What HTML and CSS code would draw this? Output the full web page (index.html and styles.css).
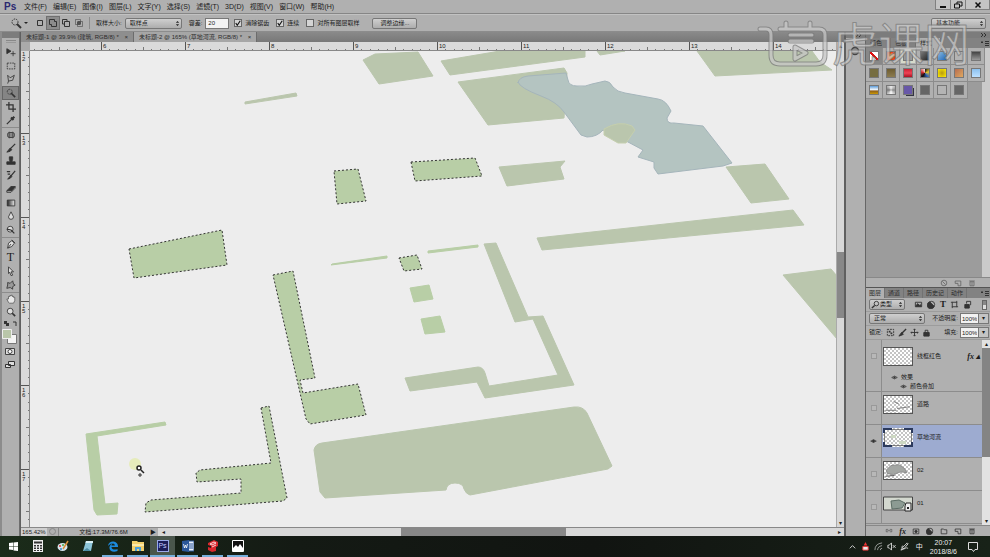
FILE: index.html
```html
<!DOCTYPE html>
<html lang="zh-CN">
<head>
    <meta charset="UTF-8">
    <meta name="viewport" content="width=device-width, initial-scale=1.0">
    <title>未标题-2 @ 165%</title>
    <link rel="stylesheet" href="styles.css">
</head>
<body>
    <header class="menubar">
        <span class="logo">Ps</span>
        <nav class="menus">
            <a href="#">文件(F)</a>
            <a href="#">编辑(E)</a>
            <a href="#">图像(I)</a>
            <a href="#">图层(L)</a>
            <a href="#">文字(Y)</a>
            <a href="#">选择(S)</a>
            <a href="#">滤镜(T)</a>
            <a href="#">3D(D)</a>
            <a href="#">视图(V)</a>
            <a href="#">窗口(W)</a>
            <a href="#">帮助(H)</a>
        </nav>
        <div class="window-buttons">
            <button aria-label="最小化"><svg viewBox="0 0 12 8"><path d="M3 6h6" stroke-width="2"/></svg></button>
            <button aria-label="还原"><svg viewBox="0 0 12 8"><path d="M5 3V1h5v4H8M2.500 3h5v4h-5z"/></svg></button>
            <button class="close" aria-label="关闭"><svg viewBox="0 0 12 8"><path d="M3.500 1.500l5 5M8.500 1.500l-5 5" stroke-width="1.500"/></svg></button>
        </div>
    </header>

    <section class="options">
        <svg class="wand" viewBox="0 0 18 12"><circle cx="5" cy="5" r="3" stroke-dasharray="1.500 1"/><path d="M7 7l4 4" stroke-width="2"/><path d="M14 5h4l-2 2z" fill="#222" stroke="none"/></svg>
        <div class="modes">
            <button aria-label="新选区"><svg viewBox="0 0 10 10"><path d="M2.500 2.500h5v5h-5z"/></svg></button>
            <button class="on" aria-label="添加到选区"><svg viewBox="0 0 10 10"><path d="M1.500 1.500h5v2h2v5h-5v-2h-2z"/></svg></button>
            <button aria-label="从选区减去"><svg viewBox="0 0 10 10"><path d="M6 3.500V1.500H1.500V6h2M3.500 3.500h5v5h-5z"/></svg></button>
            <button aria-label="与选区交叉"><svg viewBox="0 0 10 10"><path d="M1.500 1.500h5v5h-5zM3.500 3.500h5v5h-5z" opacity=".5"/><path d="M4 4h2v2H4z"/></svg></button>
        </div>
        <label class="sized">取样大小: <select><option>取样点</option></select></label>
        <label class="tolerance">容差: <input type="text" value="20"></label>
        <label class="check"><input type="checkbox" checked>消除锯齿</label>
        <label class="check"><input type="checkbox" checked>连续</label>
        <label class="check"><input type="checkbox">对所有图层取样</label>
        <button class="refine">调整边缘...</button>
        <select class="space" aria-label="工作区"><option>基本功能</option></select>
    </section>

    <main class="workspace">
        <aside class="tools">
            <div class="dock-head"></div>
            <div class="grip"></div>
            <div class="tool-list">
                <button aria-label="移动"><svg viewBox="0 0 12 12"><path class="f" d="M1 2l5 3-5 3z"/><path d="M8.500 5v6M5.500 8h6"/></svg></button>
                <button aria-label="矩形选框"><svg viewBox="0 0 12 12"><path d="M1.500 2.500h9v7h-9z" stroke-dasharray="2 1"/></svg></button>
                <button aria-label="套索"><svg viewBox="0 0 12 12"><path d="M2 1.500l3 3 5-3-2 6-5 1zM3 8.500l-1 3"/></svg></button>
                <button class="on" aria-label="魔棒"><svg viewBox="0 0 12 12"><circle cx="4.500" cy="4.500" r="3" stroke-dasharray="2 1"/><path d="M6 6l5 5" stroke-width="2"/></svg></button>
                <button aria-label="裁剪"><svg viewBox="0 0 12 12"><path d="M3.500 0v8.500H12M0 3.500h8.500V12" stroke-width="1.500"/></svg></button>
                <button aria-label="吸管"><svg viewBox="0 0 12 12"><path d="M1 11l6-6" stroke-width="1.500"/><path d="M6 3l3 3M7 5l3-3" stroke-width="2.500"/></svg></button>
                <button class="first" aria-label="修补"><svg viewBox="0 0 12 12"><rect x="2" y="3" width="8" height="6" rx="2" fill="#888"/><path d="M4 2v8M8 2v8" stroke-width=".7"/></svg></button>
                <button aria-label="画笔"><svg viewBox="0 0 12 12"><path d="M11 1L5 7" stroke-width="1.500"/><path class="f" d="M5 6l2 2-2 2-4 1z"/></svg></button>
                <button aria-label="图章"><svg viewBox="0 0 12 12"><path class="f" d="M4 1h4v3l-1 3h4v3H1V7h4L4 4z"/></svg></button>
                <button aria-label="历史画笔"><svg viewBox="0 0 12 12"><path d="M11 1L6 7M1 2h4M2 5h3" stroke-width="1.500"/><path class="f" d="M6 6l1 2-2 2-3 1z"/></svg></button>
                <button aria-label="橡皮擦"><svg viewBox="0 0 12 12"><path class="f" d="M1 8l5-5h5L7 8z"/><path d="M1 8v2h5l5-5V3"/></svg></button>
                <button aria-label="渐变"><svg viewBox="0 0 12 12"><defs><linearGradient id="grad"><stop stop-color="#222"/><stop offset="1" stop-color="#eee"/></linearGradient></defs><path d="M1.500 2.500h9v7h-9z" fill="url(#grad)"/></svg></button>
                <button aria-label="模糊"><svg viewBox="0 0 12 12"><path d="M6 1l3 6a3 3 0 1 1-6 0z" fill="#ddd"/></svg></button>
                <button aria-label="减淡"><svg viewBox="0 0 12 12"><circle cx="5" cy="5" r="3.500" fill="#ddd"/><path d="M1 5l5 1 4 4" stroke-width="1.500"/></svg></button>
                <button class="first" aria-label="钢笔"><svg viewBox="0 0 12 12"><path d="M2 11l1-6 4-3 3 3-3 4zM2 11l4-5M7 1l4 4" fill="#ddd"/></svg></button>
                <button class="letter" aria-label="文字">T</button>
                <button aria-label="路径选择"><svg viewBox="0 0 12 12"><path d="M3 1l6 6H6l2 4-2 .500-1.500-4L3 9z" fill="#ddd"/></svg></button>
                <button aria-label="形状"><svg viewBox="0 0 12 12"><path d="M2 3l3 1 3-3 1 4 2 1-3 2v3L5 9l-4 1 1-4z" fill="#999"/></svg></button>
                <button class="first" aria-label="抓手"><svg viewBox="0 0 12 12"><path d="M3 10L1 6l2 0V3h1.500V2H6V1.500h1.500V3H9v1h1.500v4L9 11H4z" fill="#e8e8e8" stroke-width=".7"/></svg></button>
                <button aria-label="缩放"><svg viewBox="0 0 12 12"><circle cx="5" cy="5" r="3.500" fill="#ddd"/><path d="M7.500 7.500L11 11" stroke-width="2"/></svg></button>
            </div>
            <svg class="swatches" viewBox="0 0 17 54">
                <path d="M2 2h3v3H2zM4 4h3v3H4z" fill="#333"/>
                <path d="M11 3h3v4" stroke="#333"/>
                <path d="M5.500 15.500h9v9h-9z" fill="#f4f4f4" stroke="#777"/>
                <path d="M.500 10.500h9v9h-9z" fill="#b9c6a9" stroke="#eee"/>
                <path d="M3.500 29.500h9v6h-9z" fill="#ddd" stroke="#444"/>
                <circle cx="8" cy="32.500" r="2" fill="#fff" stroke="#444"/>
                <path d="M6.500 42.500h6v4h-6zM3.500 45.500h5v3h-5z" fill="#ddd" stroke="#333"/>
            </svg>
        </aside>

        <section class="document">
            <div class="tabs">
                <button class="tab">未标题-1 @ 39.9% (建筑, RGB/8) * <i>×</i></button>
                <button class="tab on">未标题-2 @ 165% (草地河流, RGB/8) * <i>×</i></button>
            </div>
            <div class="view">
                <div class="corner"></div>
                <svg class="ruler-x">
                    <defs>
                        <pattern id="ticks-x" x="71" width="84" height="9" patternUnits="userSpaceOnUse">
                            <path d="M.500 0v9" stroke="#555"/>
                            <path d="M8.500 7v2M17.500 7v2M25.500 7v2M34.500 7v2M42.500 5v4M50.500 7v2M59.500 7v2M67.500 7v2M76.500 7v2" stroke="#777"/>
                        </pattern>
                    </defs>
                    <rect width="100%" height="9" fill="url(#ticks-x)" stroke="none"/>
                    <g>
                        <text x="73" y="6">6</text>
                        <text x="157" y="6">7</text>
                        <text x="241" y="6">8</text>
                        <text x="325" y="6">9</text>
                        <text x="409" y="6">10</text>
                        <text x="493" y="6">11</text>
                        <text x="577" y="6">12</text>
                        <text x="661" y="6">13</text>
                        <text x="745" y="6">14</text>
                    </g>
                </svg>
                <div class="scroll-y"><button aria-label="向上滚动">▴</button><span class="thumb"></span><button aria-label="向下滚动">▾</button></div>
                <svg class="ruler-y">
                    <defs>
                        <pattern id="ticks-y" y="82" width="9" height="84" patternUnits="userSpaceOnUse">
                            <path d="M0 .500h9" stroke="#555"/>
                            <path d="M7 8.500h2M7 17.500h2M7 25.500h2M7 34.500h2M5 42.500h4M7 50.500h2M7 59.500h2M7 67.500h2M7 76.500h2" stroke="#777"/>
                        </pattern>
                    </defs>
                    <rect width="9" height="100%" fill="url(#ticks-y)" stroke="none"/>
                    <g>
                        <text x="1" y="5">1<tspan x="1" dy="5">2</tspan></text>
                        <text x="1" y="89">1<tspan x="1" dy="5">3</tspan></text>
                        <text x="1" y="173">1<tspan x="1" dy="5">4</tspan></text>
                        <text x="1" y="257">1<tspan x="1" dy="5">5</tspan></text>
                        <text x="1" y="341">1<tspan x="1" dy="5">6</tspan></text>
                        <text x="1" y="425">1<tspan x="1" dy="5">7</tspan></text>
                    </g>
                </svg>
                <svg class="canvas" viewBox="30 51 806 476" preserveAspectRatio="xMinYMin slice">
                    <g class="muted">
                        <path d="M363 60l12-6 43-2 15 24-54 8z"/>
                        <path d="M441 61l59-10h85v6L450 75z"/>
                        <path d="M597 51h28l-25 4z"/>
                        <path d="M458 82l106-14 3 5-3 45-76 7z"/>
                        <path d="M697 51h115l8 11 12 8-117 6z"/>
                        <path d="M499 167l66-6-5 6 4 12-57 7z"/>
                        <path d="M726 167l39-3 24 35-38 4z"/>
                        <path d="M537 238l256-28 11 15-262 25z"/>
                        <path d="M783 275l48-6 6 7v63z"/>
                        <path d="M484 244l12-1 32 74 15-1 31 69-89 13-8-16-67 9-5-13 73-11q5 0 7 6l4 13 69-11-25-56-18 3z"/>
                        <path d="M314 450q1-6 8-7l252-36q9-1 13 6l25 53-4 3-138 26q-4-1-6-6-1-6-9-6t-9 7l-121 8-5-6z"/>
                        <path d="M245 102l51-9 1 3-52 8z"/>
                    </g>
                    <path class="river" d="M518 83q1-6 10-7l38-3 2 7q1 6 9 6 9 1 15-2l13-3q5 0 8 6 4 5 12 6l33 6q8 1 13 12l-4 7q0 6 7 5l29 3 29 37-9 3-65 8-4-6v-6l-16-5 5-7-15-8-25-12q-6 7-16 7l-6-2-17-23q-7-10-23-16-21-8-23-14z"/>
                    <path class="island" d="M604 129q15-9 28-3l3 4-9 13h-8l-14-8z"/>
                    <g class="green">
                        <path d="M86 434l79-12 1 3-69 11 8 68 13-1-1 11-20 1-3-5z"/>
                        <path d="M332 264l55-8v2l-56 7zM428 251l50-6v2l-50 6z"/>
                        <path d="M410 288l19-3 4 14-19 3zM421 319l19-3 5 16-20 2z"/>
                    </g>
                    <g class="selected">
                        <path d="M129 249l93-19 5 35-93 13z"/>
                        <path d="M334 171l24-2 8 32-29 3z"/>
                        <path d="M411 162l64-4 7 18-67 5z"/>
                        <path d="M399 258l18-3 5 14-18 2z"/>
                        <path d="M273 275l20-4 22 107-15 2 3 13 55-9 8 31-56 9-4-5z"/>
                        <path d="M261 408l8-2 18 92-4 3-138 11 1-9 5-3 90-7v-14l-44 3-1-9 4-3 71-7z"/>
                    </g>
                    <circle cx="135" cy="464" r="6" fill="#e6ecbb" stroke="none"/>
                    <path d="M141 470l3 3" stroke="#222" stroke-width="1.500"/>
                    <circle cx="139" cy="468" r="2" fill="#fff" stroke="#222" stroke-width="1.500"/>
                    <path d="M138 475h4M140 473v4" stroke="#333"/>
                </svg>
                <div class="status">
                    <span class="zoom">165.42%</span>
                    <span class="clock"></span>
                    <span class="size">文档:17.3M/76.6M</span>
                    <button aria-label="状态菜单">▶</button>
                    <div class="scroll-x"><button aria-label="向左滚动">◂</button><span class="thumb"></span><button aria-label="向右滚动">▸</button></div>
                </div>
            </div>
        </section>

        <aside class="strip">
            <div class="dock-head"><svg viewBox="0 0 8 6"><path d="M1 1l2 2-2 2M4 1l2 2-2 2"/></svg></div>
            <svg class="history" viewBox="0 0 18 14"><circle cx="9" cy="7" r="3.500" fill="#999" stroke="#444" stroke-width="1.500"/></svg>
        </aside>

        <aside class="panels">
            <div class="dock-head"><svg viewBox="0 0 8 6"><path d="M1 1l2 2-2 2M4 1l2 2-2 2"/></svg></div>
            <section class="styles">
                <div class="panel-tabs"><button>颜色</button><button>色板</button><button class="on">样式</button><svg viewBox="0 0 10 8"><path class="f" d="M1 3h2L2 4z"/><path d="M5 2.500h4M5 4.500h4M5 6.500h4"/></svg></div>
                <div class="styles-body">
                    <div class="style-grid">
                        <i class="none"></i><i class="fire"></i><i class="grey"></i><i class="shade"></i><i class="blue"></i><i class="clear"></i><i class="half"></i>
                        <i class="olive"></i><i class="brown"></i><i class="red"></i><i class="camo"></i><i class="yellow"></i><i class="tan"></i><i class="sky"></i>
                        <i class="sunset"></i><i class="noise"></i><i class="purple"></i><i class="dark"></i><i class="clear"></i><i class="dark"></i>
                    </div>
                </div>
                <div class="panel-foot styles-foot">
                    <svg viewBox="0 0 10 10"><circle cx="5" cy="5" r="3.500"/><path d="M3 3l4 4"/></svg>
                    <svg viewBox="0 0 10 10"><path d="M1.500 2.500h7v6H5v-3H1.500z"/></svg>
                    <svg viewBox="0 0 10 10"><path d="M2.500 3.500h5v5h-5zM1.500 2.500h7M5 4v4"/></svg>
                </div>
            </section>
            <section class="layers">
                <div class="panel-tabs"><button class="on">图层</button><button>通道</button><button>路径</button><button>历史记</button><button>动作</button><svg viewBox="0 0 10 8"><path class="f" d="M1 3h2L2 4z"/><path d="M5 2.500h4M5 4.500h4M5 6.500h4"/></svg></div>
                <div class="row filter">
                    <span class="kind"><svg viewBox="0 0 10 10"><circle cx="6" cy="4" r="2.500"/><path d="M4 6L1 9" stroke-width="1.500"/></svg><select aria-label="图层过滤"><option>类型</option></select></span>
                    <svg viewBox="0 0 10 10"><path d="M1.500 2.500h7v5h-7z"/><path class="f" d="M2 7l2-3 2 2 1-1 1 2z"/></svg>
                    <svg viewBox="0 0 10 10"><circle cx="5" cy="5" r="3.500"/><path class="f" d="M3 2l5 5a4 4 0 1 1-5-5z"/></svg>
                    <b>T</b>
                    <svg viewBox="0 0 10 10"><path d="M2.500 2.500h5v5h-5zM1 2.500h2M7 7.500h2M2.500 7v2M7.500 1v2"/></svg>
                    <svg viewBox="0 0 10 10"><path class="f" d="M2 5h5v4H2z"/><path d="M4 4V1.500h4.500v4H8"/></svg>
                    <span class="switch"></span>
                </div>
                <div class="row">
                    <select class="blend" aria-label="混合模式"><option>正常</option></select>
                    <label>不透明度: <input type="text" value="100%"></label><button class="drop" aria-label="不透明度">▾</button>
                </div>
                <div class="row lock">
                    <span>锁定:</span>
                    <svg viewBox="0 0 10 10"><path d="M1.500 1.500h7v7h-7z" stroke-dasharray="2 1"/><path class="f" d="M3 3h2v2H3zM5 5h2v2H5z" stroke="none"/></svg>
                    <svg viewBox="0 0 10 10"><path d="M9 1L4 6" stroke-width="1.500"/><path class="f" d="M4 5l2 2-2 1-3 1z"/></svg>
                    <svg viewBox="0 0 10 10"><path d="M5 1v8M1 5h8M4 2l1-1 1 1M4 8l1 1 1-1M2 4L1 5l1 1M8 4l1 1-1 1"/></svg>
                    <svg viewBox="0 0 10 10"><path class="f" d="M2 5h6v4H2z"/><path d="M3.500 5V2.500h3V5"/></svg>
                    <label>填充: <input type="text" value="100%"></label><button class="drop" aria-label="填充">▾</button>
                </div>
                <div class="layer-area">
                    <ul class="layer-list">
                        <li class="layer tall">
                            <span class="eye"><i></i></span>
                            <div class="layer-main"><span class="pic checker"></span><span class="name">线框红色</span><em>fx ▴</em></div>
                            <div class="effects">
                                <p><svg viewBox="0 0 10 6"><path d="M1 3q4-4 8 0-4 4-8 0z"/><circle class="f" cx="5" cy="3" r="1"/></svg>效果</p>
                                <p class="deep"><svg viewBox="0 0 10 6"><path d="M1 3q4-4 8 0-4 4-8 0z"/><circle class="f" cx="5" cy="3" r="1"/></svg>颜色叠加</p>
                            </div>
                        </li>
                        <li class="layer">
                            <span class="eye"><i></i></span>
                            <div class="layer-main"><svg class="pic checker" viewBox="0 0 30 19"><path d="M1 16h12M14 14l14-2M10 6l6 3" stroke="#777"/></svg><span class="name">道路</span></div>
                        </li>
                        <li class="layer on">
                            <span class="eye"><svg viewBox="0 0 10 6"><path d="M1 3q4-4 8 0-4 4-8 0z"/><circle class="f" cx="5" cy="3" r="1.500"/></svg></span>
                            <div class="layer-main"><svg class="pic checker" viewBox="0 0 30 19"><path d="M8 7h5v3H8zM16 13h7v3h-7z" fill="#cdd8c2" stroke="none"/><path d="M1.500 1.500h27v16h-27z" stroke="#555" stroke-width=".7"/><path d="M1 5V1h8M21 1h8v4M1 14v4h8M21 18h8v-4" stroke="#2c3a5c" stroke-width="2"/></svg><span class="name">草地河流</span></div>
                        </li>
                        <li class="layer">
                            <span class="eye"><i></i></span>
                            <div class="layer-main"><svg class="pic checker" viewBox="0 0 30 19"><path d="M2 9l5-5 9-1 6 4 3 5-7-1-8 3-7-1z" fill="#a3a6a3" stroke="#888"/><path d="M1 16l10-1" stroke="#555"/></svg><span class="name">02</span></div>
                        </li>
                        <li class="layer">
                            <span class="eye"><i></i></span>
                            <div class="layer-main"><svg class="pic" viewBox="0 0 30 19"><path d="M.500 3h29v13H.500z" fill="#d3d8cf" stroke="#444"/><path d="M8 7l8-1 6 3-3 5-10 1z" fill="#8c9b93" stroke="#5c6c65"/><path d="M23 9h5v8h-6v-5z" fill="#eee" stroke="#222"/><path d="M24 13h2v2h-2z" fill="#222" stroke="none"/></svg><span class="name">01</span></div>
                        </li>
                        <li class="layer rest"></li>
                    </ul>
                    <div class="layer-scroll"><button aria-label="向上滚动">▴</button><span class="thumb"></span><button aria-label="向下滚动">▾</button></div>
                </div>
                <div class="panel-foot">
                    <svg viewBox="0 0 10 10"><path d="M4 3H1.500v3H4M6 3h2.500v3H6M3 4.500h4" opacity=".6"/></svg>
                    <em>fx</em>
                    <svg viewBox="0 0 10 10"><path d="M1.500 2.500h7v6h-7z"/><circle class="f" cx="5" cy="5.500" r="1.500"/></svg>
                    <svg viewBox="0 0 10 10"><circle cx="5" cy="5" r="3.500"/><path class="f" d="M3 2l5 5a4 4 0 1 1-5-5z"/></svg>
                    <svg viewBox="0 0 10 10"><path d="M1.500 8.500v-6h3l1 1h3v5z"/></svg>
                    <svg viewBox="0 0 10 10"><path d="M1.500 2.500h7v6H5v-3H1.500z"/></svg>
                    <svg viewBox="0 0 10 10"><path d="M2.500 3.500h5v5h-5zM1.500 2.500h7M5 4v4"/></svg>
                </div>
            </section>
        </aside>
    </main>

    <footer class="taskbar">
        <div class="apps">
            <button aria-label="开始"><svg viewBox="0 0 12 12"><path d="M2 3l4-.500V6H2zM6.500 2.500L11 2v4H6.500zM2 6.500h4V10l-4-.500zM6.500 6.500H11v4.500l-4.500-.500z" fill="#fff"/></svg></button>
            <button aria-label="计算器"><svg viewBox="0 0 12 12"><path d="M1 0h10v12H1z" fill="#eee"/><path d="M2 1.500h8v2H2zM2 5h2v1.500H2zM5 5h2v1.500H5zM8 5h2v1.500H8zM2 7.500h2V9H2zM5 7.500h2V9H5zM8 7.500h2V9H8zM2 10h2v1H2zM5 10h2v1H5zM8 10h2v1H8z" fill="#333"/></svg></button>
            <button aria-label="画图"><svg viewBox="0 0 12 12"><ellipse cx="5.500" cy="7" rx="5" ry="4" fill="#d6e6ef"/><circle cx="3" cy="6" r="1" fill="#d33"/><circle cx="4" cy="9" r="1" fill="#38c"/><circle cx="6" cy="5" r="1" fill="#4a4"/><path d="M6 9l5-8" stroke="#d9903c" stroke-width="1.500"/></svg></button>
            <button aria-label="记事本"><svg viewBox="0 0 12 12"><path d="M4 1h7l-2 10H1z" fill="#8cc4d8"/><path d="M4 1h7v2H3.500z" fill="#d8eef4"/><path d="M1 11l4-3 4 3z" fill="#4d8ca5"/></svg></button>
            <button class="open" aria-label="Edge"><svg viewBox="0 0 12 12"><path d="M1 6a5 5 0 0 1 10 1H4.500c0 3 4 3 6 2v2C6 13 2 11 2.500 7 3 5 4 4 5.500 3.500 3 3.500 2 5 1 6zM4.500 5.500h3.500q-.500-2-2-2t-1.500 2z" fill="#1c8ade"/></svg></button>
            <button class="open" aria-label="文件夹"><svg viewBox="0 0 12 12"><path d="M0 1h5l1 1h6v9H0z" fill="#f1cf6b"/><path d="M0 4h12v2H0z" fill="#fbe9a8"/><path d="M3 11V7h6v4H7V9H5v2z" fill="#4ba0d9"/></svg></button>
            <button class="open active" aria-label="Photoshop"><span class="ps">Ps</span></button>
            <button class="open" aria-label="Word"><svg viewBox="0 0 12 12"><path d="M6 1h6v10H6z" fill="#e9f0fa" stroke="#2b579a"/><path d="M7 4h4M7 6h4M7 8h4" stroke="#2b579a"/><path d="M0 1l7-1v12l-7-1z" fill="#2b579a"/><path d="M1.500 4l1 4 1-3 1 3 1-4" stroke="#fff" fill="none" stroke-width=".8"/></svg></button>
            <button class="open" aria-label="SketchUp"><svg viewBox="0 0 12 12"><path d="M1 3l6-3 4 2v4l-2 1v4l-4 1-4-2V7l3 1V6L1 5z" fill="#d9272d"/><path d="M3 4l4-2 2 1-4 2zM5 7l4-2" stroke="#fff" fill="none" stroke-width=".8"/></svg></button>
            <button class="open" aria-label="照片"><svg viewBox="0 0 12 12"><path d="M.500.500h11v11H.500z" fill="#111" stroke="#fff"/><path d="M1 11V8l3-3 2 2 2-3 3 4v3z" fill="#fff"/></svg></button>
        </div>
        <div class="tray">
            <svg viewBox="0 0 10 10"><path d="M2 7l3-3 3 3"/></svg>
            <svg viewBox="0 0 10 10"><path d="M2 5h6v4H2z" fill="#e8e8e8" stroke="#e33"/><path d="M5 0l2 4H3z" fill="#e33" stroke="none"/></svg>
            <svg viewBox="0 0 10 10"><path d="M1 9q0-7 8-8M4 9q0-4 5-5M7 9q0-2 2-2" opacity=".7"/></svg>
            <svg viewBox="0 0 10 10"><path d="M1 3.500h1.500L5 1v8L2.500 6.500H1zM6.500 3.500l3 3M9.500 3.500l-3 3"/></svg>
            <svg viewBox="0 0 10 10"><path d="M1 9l3-1 5-6-1-1-5 5zM3 4q-2 2 0 3t3 0 3 0"/></svg>
            <span class="ime">中</span>
            <div class="time"><span>20:07</span><span>2018/8/6</span></div>
            <svg class="note" viewBox="0 0 12 12"><path d="M1.500 1.500h9v7H8l-1.500 2L5 8.500H1.500z"/></svg>
        </div>
    </footer>

    <svg class="watermark" viewBox="0 0 214 56">
        <defs>
            <path id="frame" d="M4 11h6q5 0 5 6v20q0 9 9 9h36q9 0 9-9V17q0-6-6-6H24M30 5v6M54 5v6M34 17h22M34 23h22M39 29l11 6-11 6z"/>
        </defs>
        <use class="edge" href="#frame"/>
        <use class="tube" href="#frame"/>
        <text x="76" y="43">虎课网</text>
    </svg>
</body>
</html>
```
FILE: styles.css
```css
* {
    box-sizing: border-box;
}

body {
    display: flex;
    flex-direction: column;
    height: 100vh;
    margin: 0;
    overflow: hidden;
    background: #b0b0b0;
    color: #1c1c1c;
    font-family: "Liberation Sans", "Noto Sans CJK SC", sans-serif;
    font-size: 6px;
    line-height: 9px;
    white-space: nowrap;
}

button, select, input {
    margin: 0;
    padding: 0;
    border: none;
    border-radius: 0;
    background: none;
    color: inherit;
    font: inherit;
    line-height: 9px;
    appearance: none;
}

a {
    color: inherit;
    text-decoration: none;
}

i, em {
    font-style: normal;
}

svg {
    display: block;
    fill: none;
    stroke: #333;
}

svg text {
    stroke: none;
    fill: #222;
}

.f {
    fill: #333;
}

/* menu bar */
.menubar {
    display: flex;
    align-items: center;
    height: 14px;
    padding-left: 4px;
    border-bottom: 1px solid #868686;
    font-size: 7px;
}

.logo {
    width: 20px;
    color: #2b2870;
    font-size: 10px;
    font-weight: bold;
}

.menus {
    display: flex;
    gap: 6px;
}

.window-buttons {
    display: flex;
    align-self: flex-start;
    margin-left: auto;
    border: 1px solid #808080;
    border-top: none;
    background: #c4c4c4;
}

.window-buttons button {
    width: 15px;
    height: 9px;
    border-right: 1px solid #808080;
}

.window-buttons .close {
    width: 23px;
    border: none;
}

.window-buttons svg {
    height: 8px;
    margin: 0 auto;
    stroke: #111;
}

/* tool options */
.options {
    display: flex;
    align-items: center;
    height: 18px;
    padding: 0 4px 0 10px;
    border-top: 1px solid #c2c2c2;
    border-bottom: 1px solid #8c8c8c;
}

.wand {
    width: 18px;
    height: 12px;
}

.modes {
    display: flex;
    gap: 1px;
    margin: 0 6px;
    padding-right: 4px;
    border-right: 1px solid #8c8c8c;
}

.modes button {
    width: 12px;
    height: 12px;
}

.modes svg {
    width: 10px;
    margin: 0 auto;
}

.modes .on {
    background: #8c8c8c;
    outline: 1px solid #707070;
}

.options label {
    display: flex;
    align-items: center;
    gap: 3px;
}

select {
    height: 11px;
    padding: 0 4px;
    border: 1px solid #777;
    border-radius: 2px;
    background: url("data:image/svg+xml,%3Csvg xmlns='http://www.w3.org/2000/svg' viewBox='0 0 6 8'%3E%3Cpath d='M1 3l2-2 2 2zM1 5l2 2 2-2z' fill='%23222'/%3E%3C/svg%3E") right 1px center / 5px 7px no-repeat, linear-gradient(#cfcfcf, #adadad);
}

.sized select {
    width: 57px;
}

.tolerance {
    margin: 0 5px 0 7px;
}

input[type="text"] {
    width: 24px;
    height: 11px;
    padding: 0 2px;
    border: 1px solid #777;
    background: #f2f2f2;
}

.check {
    margin-right: 7px;
}

.check input {
    width: 8px;
    height: 8px;
    border: 1px solid #666;
    background: #d4d4d4;
}

.check input:checked {
    background: url("data:image/svg+xml,%3Csvg xmlns='http://www.w3.org/2000/svg' viewBox='0 0 8 8'%3E%3Cpath d='M1 4l2 3 4-6' fill='none' stroke='%23111' stroke-width='1.5'/%3E%3C/svg%3E") #d4d4d4;
}

.refine {
    height: 11px;
    margin-left: 6px;
    padding: 0 7px;
    border: 1px solid #777;
    border-radius: 2px;
    background: linear-gradient(#cfcfcf, #adadad);
}

.space {
    width: 55px;
    margin-left: auto;
}

/* workspace */
.workspace {
    display: flex;
    flex: 1;
    min-height: 0;
}

.dock-head {
    display: flex;
    align-items: center;
    justify-content: flex-end;
    height: 6px;
    padding-right: 2px;
    background: #7c7c7c;
}

.dock-head svg {
    width: 8px;
}

.tools {
    width: 20px;
    border-left: 2px solid #8c8c8c;
    border-right: 1px solid #6e6e6e;
}

.grip {
    width: 10px;
    height: 3px;
    margin: 2px auto;
    border-top: 1px solid #888;
    border-bottom: 1px solid #999;
}

.tool-list {
    display: grid;
    grid-auto-rows: 1fr;
    height: 274px;
}

.tool-list button {
    display: grid;
    place-items: center;
}

.tool-list .first {
    border-top: 1px solid #8c8c8c;
}

.tool-list .on {
    background: #858585;
    outline: 1px solid #666;
    outline-offset: -1px;
}

.tool-list svg {
    width: 10px;
    height: 10px;
}

.tool-list .letter {
    font-family: "Liberation Serif", serif;
    font-size: 12px;
}

.swatches {
    width: 17px;
    height: 54px;
    stroke: none;
}

.document {
    display: flex;
    flex: 1;
    flex-direction: column;
    min-width: 0;
    border-left: 1px solid #606060;
    border-right: 2px solid #606060;
}

.tabs {
    display: flex;
    height: 10px;
    background: linear-gradient(#8a8a8a, #787878);
}

.tab {
    padding: 0 5px;
    border-right: 1px solid #6c6c6c;
    background: #8e8e8e;
    color: #2c2c2c;
}

.tab i {
    margin-left: 4px;
}

.tab.on {
    background: #a6a6a6;
}

.view {
    display: grid;
    flex: 1;
    grid-template-columns: 9px 1fr 8px;
    grid-template-rows: 9px 1fr 9px;
    min-height: 0;
}

.corner, .ruler-x, .ruler-y {
    background: #dadada;
}

.corner {
    background: #aaa;
}

.ruler-x {
    width: 100%;
    height: 9px;
    border-bottom: 1px solid #888;
}

.ruler-y {
    grid-row: 2;
    width: 9px;
    height: 100%;
    border-right: 1px solid #888;
}

.ruler-x text, .ruler-y text {
    font-size: 6px;
}

.canvas {
    width: 100%;
    height: 100%;
    min-height: 0;
    background: #ededed;
    stroke-linejoin: round;
}

.muted {
    fill: #bac6ad;
    stroke: #bac6ad;
}

.river {
    fill: #b4c4c1;
    stroke: #a5b5bb;
}

.island {
    fill: #bac6ad;
    stroke: #c5cfae;
}

.green {
    fill: #b8cea6;
    stroke: #b8cea6;
}

.selected {
    fill: #b8cea6;
    stroke: #333;
    stroke-dasharray: 2 2;
}

.scroll-y {
    display: flex;
    grid-column: 3;
    grid-row: 1 / 3;
    flex-direction: column;
    border-left: 1px solid #aaa;
    background: #d8d8d8;
}

.scroll-y button, .layer-scroll button {
    height: 8px;
    line-height: 8px;
}

.scroll-y .thumb {
    height: 66px;
    margin: 202px 0 auto;
    background: #888;
}

.status {
    display: flex;
    grid-column: 1 / 4;
    grid-row: 3;
    border-top: 1px solid #888;
    line-height: 8px;
}

.zoom {
    width: 26px;
    padding-left: 1px;
    background: #d0d0d0;
}

.clock {
    width: 7px;
    height: 7px;
    margin: 0 2px;
    border: 1px solid #888;
    border-radius: 50%;
}

.size {
    width: 90px;
    border-left: 1px solid #888;
    text-align: center;
}

.status button {
    width: 10px;
    line-height: 8px;
}

.scroll-x {
    display: flex;
    flex: 1;
    background: #d8d8d8;
}

.scroll-x .thumb {
    width: 24%;
    margin-left: 34%;
    margin-right: auto;
    background: #888;
}

.strip {
    width: 20px;
    border-right: 1px solid #666;
}

.history {
    width: 18px;
    margin-top: 6px;
}

/* right panels */
.panels {
    display: flex;
    flex-direction: column;
    width: 124px;
}

.styles {
    display: flex;
    flex: 1;
    flex-direction: column;
    min-height: 0;
}

.panel-tabs {
    display: flex;
    height: 10px;
    background: #828282;
}

.panel-tabs button {
    padding: 0 3px;
    border-right: 1px solid #727272;
    color: #2c2c2c;
}

.styles .panel-tabs button {
    padding: 0 8px 0 4px;
}

.panel-tabs .on {
    background: #b0b0b0;
}

.panel-tabs svg {
    width: 10px;
    margin-left: auto;
}

.styles-body {
    flex: 1;
    padding-right: 8px;
    background: linear-gradient(90deg, #9c9c9c 116px, #cacaca 116px);
}

.style-grid {
    display: grid;
    grid-template-columns: repeat(7, 1fr);
    grid-auto-rows: 17px;
}

.style-grid i {
    padding: 4px;
    border: solid #8c8c8c;
    border-width: 0 1px 1px 0;
    background: #b0b0b0;
}

.style-grid i::before {
    display: block;
    width: 8px;
    height: 8px;
    outline: 1px solid #777;
    content: "";
}

.style-grid .none { background: #888; }
.none::before { background: linear-gradient(45deg, #fff 42%, #d11 42% 58%, #fff 58%); }
.fire::before { background: radial-gradient(#fc3, #e31 70%); }
.grey::before { background: #999; box-shadow: 0 0 0 3px #d6dacb; }
.shade::before { background: linear-gradient(135deg, #777, #222); }
.blue::before { background: linear-gradient(135deg, #8bd, #26b); }
.clear::before { background: #b4b4b4; }
.half::before { background: linear-gradient(#444, #999); }
.olive::before { background: #766d40; }
.brown::before { background: linear-gradient(#6d5c30, #8c7c50); }
.red::before { background: linear-gradient(#c23, #e45 50%, #a12); }
.camo::before { background: conic-gradient(#111, #e5c72c, #36b, #111, #d33, #eee); }
.yellow::before { background: radial-gradient(#b79a10, #fe0); }
.tan::before { background: linear-gradient(135deg, #b66d50, #e0a860); }
.sky::before { background: linear-gradient(#8bc0ee, #bde0ff); }
.sunset::before { background: linear-gradient(#5a9ad8, #fff 50%, #8a5a1c 60%, #c90); }
.noise::before { background: conic-gradient(#eee, #888, #fff, #777, #eee); }
.purple::before { background: #6858a8; box-shadow: 2px 2px #334; }
.dark::before { background: #666; }

.panel-foot {
    display: flex;
    align-items: center;
    justify-content: flex-end;
    gap: 6px;
    height: 11px;
    padding-right: 14px;
    border-top: 1px solid #888;
}

.panel-foot svg {
    width: 8px;
}

.panel-foot em, .layer-main em {
    font-family: "Liberation Serif", serif;
    font-size: 8px;
    font-style: italic;
    font-weight: bold;
}

.styles-foot {
    border-bottom: 1px solid #555;
}

.styles-foot svg {
    opacity: .6;
}

.row {
    display: flex;
    align-items: center;
    height: 14px;
    padding: 0 1px 0 3px;
    border-bottom: 1px solid #9c9c9c;
}

.filter {
    gap: 4px;
}

.kind {
    display: grid;
    align-items: center;
    margin-right: 5px;
}

.kind svg, .kind select {
    grid-area: 1 / 1;
}

.kind svg {
    z-index: 1;
    width: 7px;
    margin-left: 2px;
}

.kind select {
    width: 36px;
    padding-left: 10px;
}

.row svg {
    width: 9px;
}

.row b {
    font-family: "Liberation Serif", serif;
    font-size: 9px;
}

.switch {
    width: 5px;
    height: 10px;
    margin-left: auto;
    margin-right: 2px;
    border: 1px solid #666;
    background: linear-gradient(#888 50%, #ddd 50%);
}

.blend {
    width: 56px;
}

.row label {
    display: flex;
    align-items: center;
    gap: 2px;
    margin-left: auto;
}

.row input[type="text"] {
    width: 19px;
    padding: 0 1px;
}

.drop {
    width: 10px;
    height: 11px;
    border: 1px solid #777;
    border-left: none;
    background: #c4c4c4;
}

.lock {
    gap: 3px;
}

.lock .drop {
    margin-left: -3px;
}

.layer-area {
    display: flex;
}

.layer-list {
    flex: 1;
    height: 185px;
    margin: 0;
    padding: 0;
    overflow: hidden;
    list-style: none;
}

.layer {
    display: grid;
    grid-template-columns: 16px 1fr;
    align-items: center;
    height: 33px;
    border-bottom: 1px solid #8c8c8c;
}

.tall {
    grid-template-rows: 33px 18px;
    height: 52px;
}

.eye {
    display: grid;
    place-items: center;
    align-self: stretch;
    grid-row: 1 / 3;
    border-right: 1px solid #8c8c8c;
}

.tall .eye {
    padding-bottom: 20px;
}

.eye i {
    width: 6px;
    height: 6px;
    border: 1px solid #999;
    background: #b8b8b8;
}

.eye svg, .effects svg {
    width: 7px;
}

.layer-main {
    display: flex;
    align-items: center;
    padding: 0 2px 0 1px;
}

.layer-main em {
    margin-left: auto;
}

.pic {
    width: 30px;
    height: 19px;
    margin-right: 4px;
}

.checker {
    border: 1px solid #555;
    background: repeating-conic-gradient(#c4c4c4 0 25%, #fff 0 50%) 0 0 / 4px 4px;
}

.layer.on {
    background: #9dabd0;
}

.layer.on .eye {
    background: #b0b0b0;
}

.layer.on .checker {
    border: none;
}

.effects p {
    display: flex;
    gap: 3px;
    margin: 0 0 0 9px;
}

.effects .deep {
    margin-left: 18px;
}

.layer-scroll {
    display: flex;
    flex-direction: column;
    width: 8px;
    background: #e2e2e2;
}

.layer-scroll .thumb {
    height: 109px;
    margin-bottom: auto;
    background: #848484;
}

/* taskbar */
.taskbar {
    display: flex;
    align-items: stretch;
    justify-content: space-between;
    height: 21px;
    background: linear-gradient(90deg, #1b2c1a, #141a14 30%, #111411 60%, #182218);
    color: #eee;
    font-size: 7px;
}

.apps {
    display: flex;
}

.apps button {
    width: 21px;
    margin: 0 2px;
    border-bottom: 2px solid transparent;
}

.apps svg {
    width: 12px;
    margin: 0 auto;
    stroke: none;
}

.apps .open {
    border-color: #76aedb;
}

.apps .active {
    width: 25px;
    margin: 0;
    background: #4a564c;
}

.ps {
    display: block;
    width: 12px;
    height: 12px;
    margin: 0 auto;
    border: 1px solid #9aa8e8;
    background: #1c1c58;
    color: #c4ccff;
    line-height: 10px;
}

.tray {
    display: flex;
    align-items: center;
    gap: 4px;
    padding-right: 11px;
}

.tray svg {
    width: 9px;
    stroke: #ddd;
}

.ime {
    margin: 0 3px;
}

.time {
    display: flex;
    flex-direction: column;
    align-items: center;
    margin-right: 6px;
}

.tray .note {
    width: 12px;
}

/* mark laid over the top right corner */
.watermark {
    position: absolute;
    top: 18px;
    right: 20px;
    width: 214px;
    height: 56px;
    stroke-linecap: round;
    stroke-linejoin: round;
    opacity: .75;
    pointer-events: none;
}

.watermark .edge {
    stroke: #7c7c7c;
    stroke-width: 5px;
}

.watermark .tube {
    stroke: #c6c6c6;
    stroke-width: 3px;
}

.watermark text {
    fill: #c6c6c6;
    stroke: #7c7c7c;
    stroke-width: 1px;
    font-family: "Noto Sans CJK SC", sans-serif;
    font-size: 46px;
}
```
